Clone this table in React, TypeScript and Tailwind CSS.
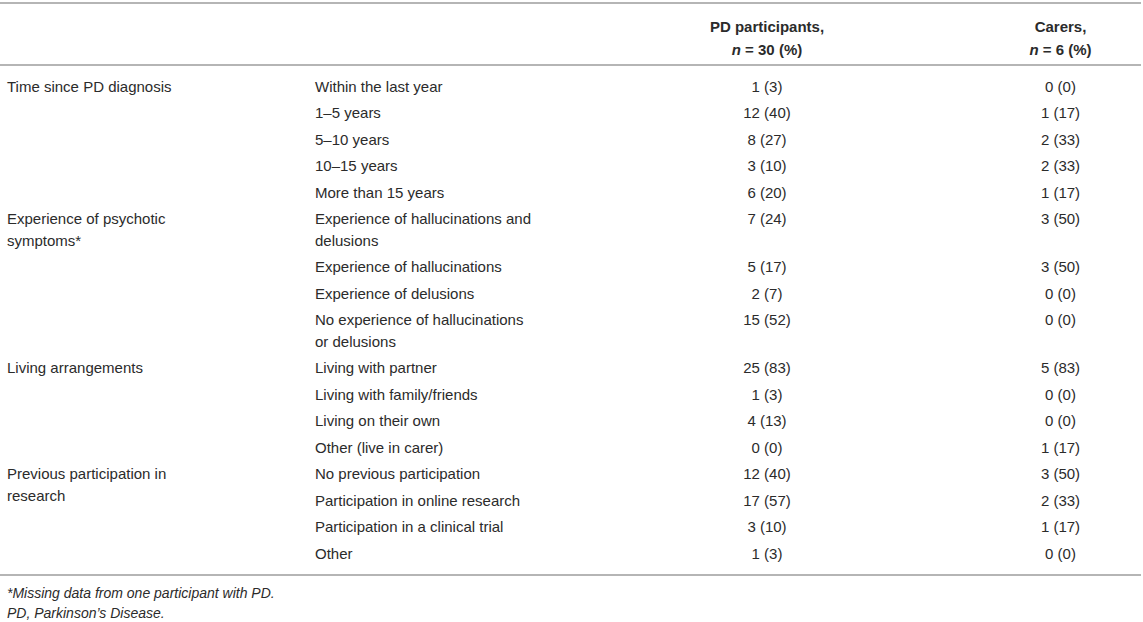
type Row = { label: string; pd: string; carers: string };
type Group = { title: string; rows: Row[] };

// line breaks in labels follow the printed table
const groups: Group[] = [
  {
    title: "Time since PD diagnosis",
    rows: [
      { label: "Within the last year", pd: "1 (3)", carers: "0 (0)" },
      { label: "1–5 years", pd: "12 (40)", carers: "1 (17)" },
      { label: "5–10 years", pd: "8 (27)", carers: "2 (33)" },
      { label: "10–15 years", pd: "3 (10)", carers: "2 (33)" },
      { label: "More than 15 years", pd: "6 (20)", carers: "1 (17)" },
    ],
  },
  {
    title: "Experience of psychotic\nsymptoms*",
    rows: [
      { label: "Experience of hallucinations and\ndelusions", pd: "7 (24)", carers: "3 (50)" },
      { label: "Experience of hallucinations", pd: "5 (17)", carers: "3 (50)" },
      { label: "Experience of delusions", pd: "2 (7)", carers: "0 (0)" },
      { label: "No experience of hallucinations\nor delusions", pd: "15 (52)", carers: "0 (0)" },
    ],
  },
  {
    title: "Living arrangements",
    rows: [
      { label: "Living with partner", pd: "25 (83)", carers: "5 (83)" },
      { label: "Living with family/friends", pd: "1 (3)", carers: "0 (0)" },
      { label: "Living on their own", pd: "4 (13)", carers: "0 (0)" },
      { label: "Other (live in carer)", pd: "0 (0)", carers: "1 (17)" },
    ],
  },
  {
    title: "Previous participation in\nresearch",
    rows: [
      { label: "No previous participation", pd: "12 (40)", carers: "3 (50)" },
      { label: "Participation in online research", pd: "17 (57)", carers: "2 (33)" },
      { label: "Participation in a clinical trial", pd: "3 (10)", carers: "1 (17)" },
      { label: "Other", pd: "1 (3)", carers: "0 (0)" },
    ],
  },
];

export default function App() {
  return (
    <div className="w-[1143px] bg-white pt-[2px] text-[#2b2b2b] [font-family:'Liberation_Sans',Arial,sans-serif] text-[15px]">
      <table className="w-[1141px] table-fixed border-collapse">
        <colgroup>
          <col className="w-[308px]" />
          <col className="w-[304px]" />
          <col className="w-[310px]" />
          <col className="w-[219px]" />
        </colgroup>
        <thead>
          <tr className="border-t-2 border-b-2 border-[#b5b5b5]">
            <th />
            <th />
            <th className="pt-[11px] pb-[3px] text-center font-bold leading-[23px]">
              PD participants,
              <br />
              <i>n</i> = 30 (%)
            </th>
            <th className="pt-[11px] pb-[3px] pl-[58px] text-center font-bold leading-[23px]">
              Carers,
              <br />
              <i>n</i> = 6 (%)
            </th>
          </tr>
        </thead>
        <tbody className="border-b-2 border-[#b5b5b5]">
          <tr>
            <td colSpan={4} className="h-[8px] p-0" />
          </tr>
          {groups.map((g) =>
            g.rows.map((r, i) => (
              <tr key={g.title + r.label}>
                {i === 0 && (
                  <td rowSpan={g.rows.length} className="pl-[7px] py-[2.5px] align-top whitespace-pre-line leading-[21.5px]">
                    {g.title}
                  </td>
                )}
                <td className="pl-[7px] py-[2.5px] align-top whitespace-pre-line leading-[21.5px]">{r.label}</td>
                <td className="py-[2.5px] align-top text-center leading-[21.5px]">{r.pd}</td>
                <td className="py-[2.5px] pl-[58px] align-top text-center leading-[21.5px]">{r.carers}</td>
              </tr>
            ))
          )}
          <tr>
            <td colSpan={4} className="h-[8px] p-0" />
          </tr>
        </tbody>
      </table>
      <div className="pl-[7px] pt-[7px] text-[14px] italic leading-[20px]">
        <p>*Missing data from one participant with PD.</p>
        <p>PD, Parkinson’s Disease.</p>
      </div>
    </div>
  );
}
